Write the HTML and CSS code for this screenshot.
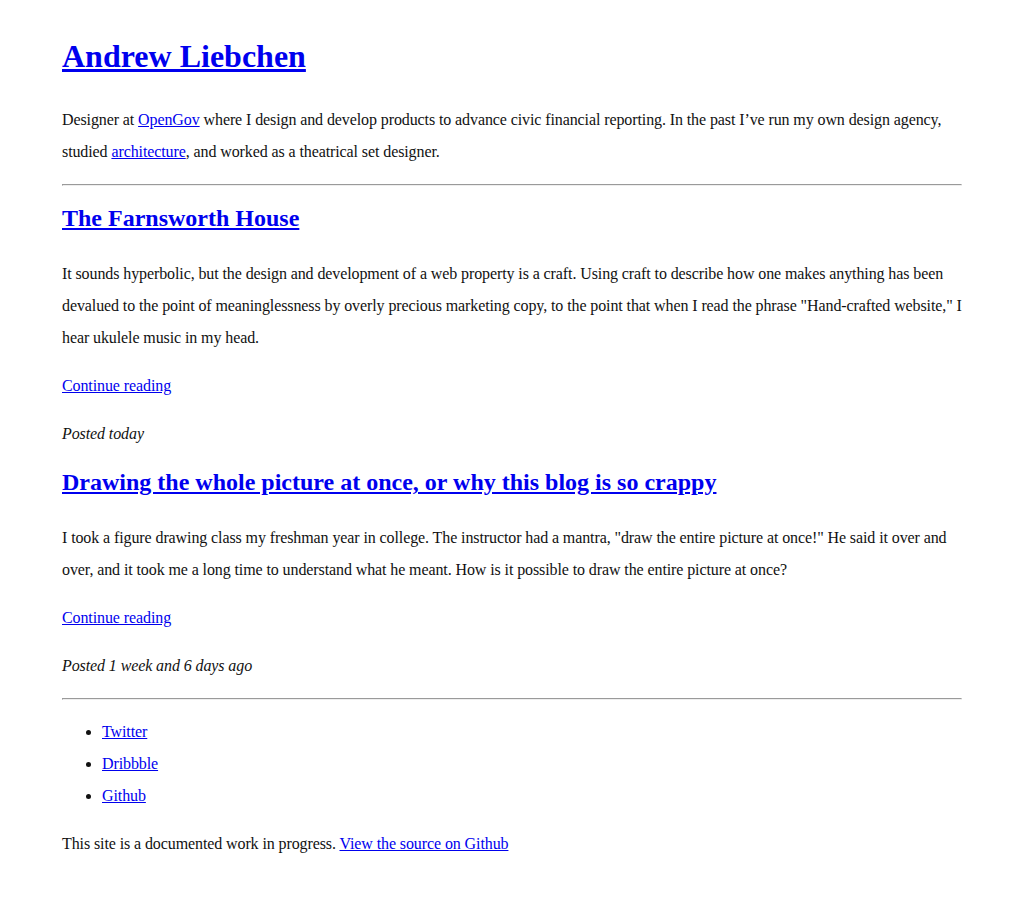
FILE: index.html
```html
<!DOCTYPE html>
<html>
<head>
<meta charset="utf-8">
<title>Andrew Liebchen</title>
<link rel="stylesheet" href="styles.css">
</head>
<body>
<div class="page">
  <header class="site-header">
    <h1 class="site-title"><a href="#">Andrew Liebchen</a></h1>
    <p>Designer at <a href="#">OpenGov</a> where I design and develop products to advance civic financial reporting. In the past I’ve run my own design agency, studied <a href="#">architecture</a>, and worked as a theatrical set designer.</p>
  </header>
  <hr>
  <main>
    <article class="post">
      <h2 class="post-title"><a href="#">The Farnsworth House</a></h2>
      <p>It sounds hyperbolic, but the design and development of a web property is a craft. Using craft to describe how one makes anything has been devalued to the point of meaninglessness by overly precious marketing copy, to the point that when I read the phrase "Hand-crafted website," I hear ukulele music in my head.</p>
      <p><a href="#">Continue reading</a></p>
      <p class="post-date">Posted today</p>
    </article>
    <article class="post">
      <h2 class="post-title"><a href="#">Drawing the whole picture at once, or why this blog is so crappy</a></h2>
      <p>I took a figure drawing class my freshman year in college. The instructor had a mantra, "draw the entire picture at once!" He said it over and over, and it took me a long time to understand what he meant. How is it possible to draw the entire picture at once?</p>
      <p><a href="#">Continue reading</a></p>
      <p class="post-date">Posted 1 week and 6 days ago</p>
    </article>
  </main>
  <hr>
  <footer>
    <ul class="social">
      <li><a href="#">Twitter</a></li>
      <li><a href="#">Dribbble</a></li>
      <li><a href="#">Github</a></li>
    </ul>
    <p>This site is a documented work in progress. <a href="#">View the source on Github</a></p>
  </footer>
</div>
</body>
</html>
```

FILE: styles.css
```css
html, body {
  margin: 0;
  padding: 0;
  background: #fff;
}
body {
  font-family: "Liberation Serif", "Times New Roman", serif;
  font-size: 16px;
  line-height: 2;
  color: #111;
}
a {
  color: #0000ee;
}
.page {
  max-width: 900px;
  margin: 0 auto;
  padding: 24px 0 24px;
}
p {
  margin: 16px 0;
  letter-spacing: -0.1px;
}
.site-title {
  font-size: 32px;
  margin: 0 0 16px;
}
.post-title {
  font-size: 24px;
  margin: 0 0 16px;
}
hr {
  margin: 16px 0 8px;
}
.post-date {
  font-style: italic;
  margin-bottom: 8px;
}
.social {
  padding-left: 40px;
  margin: 16px 0;
  letter-spacing: -0.1px;
}
```
